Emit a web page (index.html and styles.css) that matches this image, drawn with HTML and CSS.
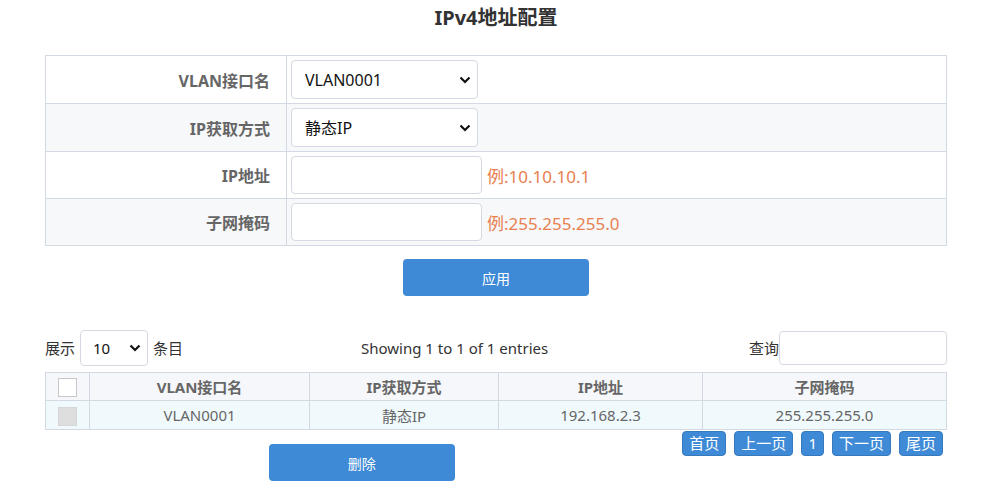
FILE: index.html
```html
<!DOCTYPE html>
<html lang="zh-CN">
<head>
  <meta charset="UTF-8" />
  <meta name="viewport" content="width=device-width, initial-scale=1.0"/>
  <title>IPv4地址配置</title>
  <link rel="stylesheet" href="styles.css">
</head>
<body>

  <div class="page">
    <h2 class="title">IPv4地址配置</h2>

    <table class="form-table">
      <tr>
        <td class="label">VLAN接口名</td>
        <td><select class="sel"><option>VLAN0001</option></select></td>
      </tr>
      <tr class="alt">
        <td class="label">IP获取方式</td>
        <td><select class="sel"><option>静态IP</option></select></td>
      </tr>
      <tr>
        <td class="label">IP地址</td>
        <td><input type="text" class="txt"><span class="hint">例:10.10.10.1</span></td>
      </tr>
      <tr class="alt">
        <td class="label">子网掩码</td>
        <td><input type="text" class="txt"><span class="hint">例:255.255.255.0</span></td>
      </tr>
    </table>

    <div class="actions">
      <button class="btn">应用</button>
    </div>

    <div class="toolbar">
      <div class="length">展示<select class="sel sel-small"><option>10</option></select>条目</div>
      <div class="info">Showing 1 to 1 of 1 entries</div>
      <div class="search">查询<input type="text" class="search-input"></div>
    </div>

    <table class="data-table">
      <thead>
        <tr>
          <th class="chk"><span class="box"></span></th>
          <th class="c-name">VLAN接口名</th>
          <th class="c-mode">IP获取方式</th>
          <th class="c-ip">IP地址</th>
          <th>子网掩码</th>
        </tr>
      </thead>
      <tbody>
        <tr>
          <td class="chk"><span class="box box-off"></span></td>
          <td>VLAN0001</td>
          <td>静态IP</td>
          <td>192.168.2.3</td>
          <td>255.255.255.0</td>
        </tr>
      </tbody>
    </table>

    <div class="bottom">
      <div class="bottom-left">
        <button class="btn">删除</button>
      </div>
      <div class="pager">
        <a class="pg">首页</a>
        <a class="pg">上一页</a>
        <a class="pg">1</a>
        <a class="pg">下一页</a>
        <a class="pg">尾页</a>
      </div>
    </div>
  </div>

</body>
</html>
```

FILE: styles.css
```css
* { margin: 0; padding: 0; box-sizing: border-box; }
body {
  font-family: "Noto Sans", "Noto Sans CJK SC", sans-serif;
  background: #fff;
  color: #333;
}
.page {
  width: 902px;
  margin-left: 45px;
}
.title {
  padding-top: 6px;
  line-height: 24px;
  font-size: 20px;
  font-weight: bold;
  text-align: center;
  color: #333;
}

/* form */
.form-table {
  width: 100%;
  margin-top: 25px;
  border-collapse: collapse;
  border: 1px solid #d3d9e2;
}
.form-table td {
  border: 1px solid #d3d9e2;
  padding: 4px 4px;
  vertical-align: middle;
}
.form-table tr.alt td { background: #f7f8fa; }
.form-table td.label {
  width: 241px;
  text-align: right;
  padding-right: 16px;
  font-size: 16px;
  font-weight: bold;
  color: #666;
}
.sel {
  -webkit-appearance: none;
  appearance: none;
  width: 187px;
  height: 39px;
  padding: 0 30px 0 13px;
  border: 1px solid #d5dae2;
  border-radius: 4px;
  background: #fff url("data:image/svg+xml,%3Csvg xmlns='http://www.w3.org/2000/svg' width='12' height='8' viewBox='0 0 12 8'%3E%3Cpath d='M1.5 1.5 6 6l4.5-4.5' fill='none' stroke='%23111' stroke-width='2.2'/%3E%3C/svg%3E") no-repeat right 6px center;
  font-family: inherit;
  font-size: 16px;
  color: #111;
  vertical-align: middle;
}
.txt {
  width: 191px;
  height: 38px;
  border: 1px solid #d5dae2;
  border-radius: 4px;
  vertical-align: middle;
  background: #fff;
}
.hint {
  margin-left: 5px;
  font-size: 17px;
  color: #e8804f;
  vertical-align: middle;
}

.actions {
  margin-top: 13px;
  text-align: center;
}
.btn {
  width: 186px;
  height: 37px;
  border: none;
  border-radius: 4px;
  background: #3e8ad6;
  color: #fff;
  font-family: inherit;
  font-size: 14px;
  cursor: pointer;
}

/* list */
.toolbar {
  display: flex;
  align-items: center;
  margin-top: 34px;
  font-size: 15px;
  line-height: 20px;
  color: #333;
}
.length {
  width: 316px;
  display: flex;
  align-items: center;
}
.sel-small {
  width: 68px;
  height: 36px;
  margin: 0 5px;
  padding-left: 12px;
  font-size: 15px;
}
.info { color: #333; }
.search {
  margin-left: auto;
  display: flex;
  align-items: center;
}
.search-input {
  width: 168px;
  height: 34px;
  border: 1px solid #d5dae2;
  border-radius: 4px;
}

.data-table {
  width: 100%;
  margin-top: 6px;
  border-collapse: collapse;
  border: 1px solid #d3d9e2;
  font-size: 15px;
  color: #666;
  text-align: center;
}
.data-table th,
.data-table td {
  border: 1px solid #d3d9e2;
  padding: 0;
}
.data-table th {
  height: 28px;
  background: #f5f7fa;
  font-weight: bold;
}
.data-table td {
  height: 29px;
  background: #f0fafd;
}
.data-table .chk { width: 44px; }
.data-table .c-name { width: 220px; }
.data-table .c-mode { width: 189px; }
.data-table .c-ip { width: 204px; }
.box {
  display: inline-block;
  width: 19px;
  height: 19px;
  border: 1px solid #c8c8c8;
  background: #fff;
  vertical-align: middle;
}
.box-off {
  border-color: #d6d6d6;
  background: #dedede;
}

.bottom {
  display: flex;
  align-items: flex-start;
}
.bottom-left {
  flex: 1;
  padding-top: 14px;
  text-align: center;
}
.pager {
  display: flex;
  gap: 8px;
  margin-top: 1px;
  padding: 0 4px;
}
.pg {
  display: inline-block;
  height: 25px;
  line-height: 23px;
  padding: 0 6px;
  border: 1px solid #3779bd;
  border-radius: 4px;
  background: #3e8ad6;
  color: #fff;
  font-size: 15px;
  text-decoration: none;
}
```
